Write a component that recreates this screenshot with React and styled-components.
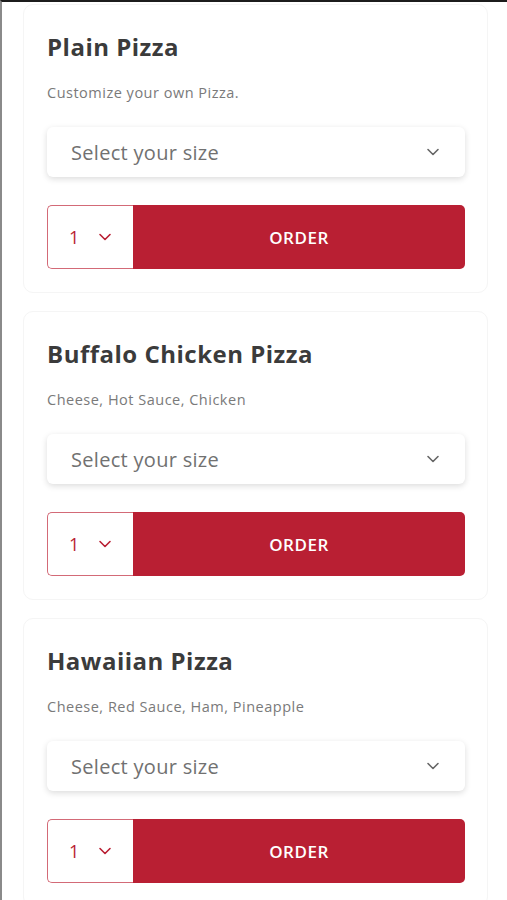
import React from "react";
import styled, { createGlobalStyle } from "styled-components";

const GlobalStyle = createGlobalStyle`
  html, body {
    margin: 0;
    padding: 0;
    background: #ffffff;
  }
  body {
    font-family: "Open Sans", Lato, "Liberation Sans", sans-serif;
  }
`;

const Screen = styled.div`
  box-sizing: border-box;
  width: 507px;
  height: 900px;
  overflow: hidden;
  border-top: 2px solid #1c1c1c;
  border-left: 2px solid #8a8a8a;
`;

const List = styled.div`
  display: flex;
  flex-direction: column;
  gap: 18px;
  padding: 2px 0 0 21px;
`;

const Card = styled.div`
  box-sizing: border-box;
  width: 465px;
  padding: 27px 22px 23px 23px;
  border: 1px solid #f5f5f5;
  border-radius: 10px;
  background: #ffffff;
`;

const Title = styled.h2`
  margin: 0;
  font-size: 24px;
  line-height: 30px;
  font-weight: 700;
  letter-spacing: 0.5px;
  color: #3b3b3b;
`;

const Description = styled.p`
  margin: 21px 0 0;
  font-size: 14.5px;
  line-height: 20px;
  letter-spacing: 0.5px;
  color: #7a7a7a;
`;

const SizeSelect = styled.div`
  margin-top: 24px;
  height: 50px;
  display: flex;
  align-items: center;
  justify-content: space-between;
  padding: 0 24px;
  border-radius: 6px;
  background: #ffffff;
  box-shadow: 0 2px 6px rgba(0, 0, 0, 0.14);
  font-size: 20px;
  letter-spacing: 0.3px;
  color: #717171;
`;

const OrderRow = styled.div`
  margin-top: 28px;
  height: 64px;
  display: flex;
`;

const Quantity = styled.div`
  box-sizing: border-box;
  width: 86px;
  display: flex;
  align-items: center;
  gap: 18px;
  padding-left: 21px;
  border: 1px solid #d36a77;
  border-right: none;
  border-radius: 5px 0 0 5px;
  font-size: 18px;
  color: #b91f33;
`;

const OrderButton = styled.button`
  flex: 1;
  border: none;
  border-radius: 0 5px 5px 0;
  background: #b91f33;
  color: #ffffff;
  font-family: inherit;
  font-size: 17px;
  font-weight: 600;
  letter-spacing: 0.5px;
  cursor: pointer;
`;

const Chevron = ({ color, size = 16 }) => (
  <svg width={size} height={size} viewBox="0 0 16 16" fill="none">
    <path
      d="M3 5.5 L8 10.5 L13 5.5"
      stroke={color}
      strokeWidth="1.6"
      strokeLinecap="round"
      strokeLinejoin="round"
    />
  </svg>
);

const pizzas = [
  { name: "Plain Pizza", desc: "Customize your own Pizza." },
  { name: "Buffalo Chicken Pizza", desc: "Cheese, Hot Sauce, Chicken" },
  { name: "Hawaiian Pizza", desc: "Cheese, Red Sauce, Ham, Pineapple" },
];

function PizzaCard({ name, desc }) {
  return (
    <Card>
      <Title>{name}</Title>
      <Description>{desc}</Description>
      <SizeSelect>
        <span>Select your size</span>
        <Chevron color="#666" />
      </SizeSelect>
      <OrderRow>
        <Quantity>
          <span>1</span>
          <Chevron color="#b91f33" />
        </Quantity>
        <OrderButton>ORDER</OrderButton>
      </OrderRow>
    </Card>
  );
}

export default function App() {
  return (
    <Screen>
      <GlobalStyle />
      <List>
        {pizzas.map((p) => (
          <PizzaCard key={p.name} {...p} />
        ))}
      </List>
    </Screen>
  );
}
